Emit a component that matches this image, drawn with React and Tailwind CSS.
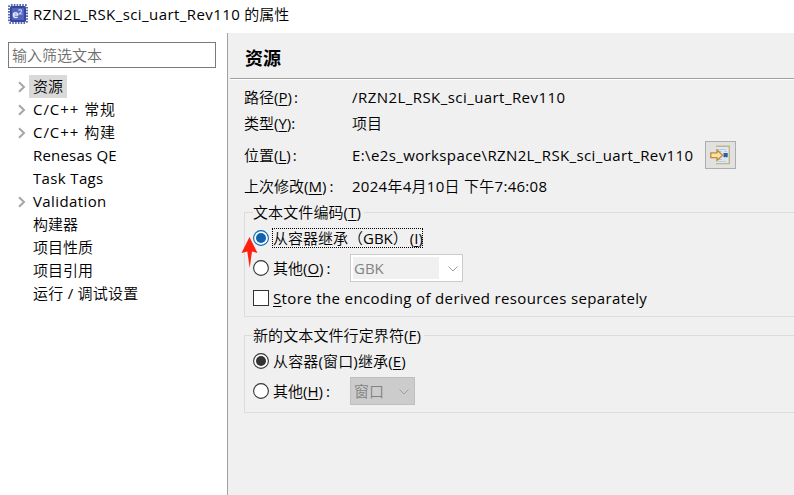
import React from "react";

const Key = ({ children }) => (
  <span className="underline decoration-1 underline-offset-2">{children}</span>
);

const Chevron = () => (
  <svg width="8" height="12" viewBox="0 0 8 12" className="mt-px ml-px shrink-0">
    <path d="M1 1.2 L6 6 L1 10.8" fill="none" stroke="#a6a6a6" strokeWidth="2" />
  </svg>
);

const ChipIcon = () => (
  <svg width="20" height="20" viewBox="0 0 20 20" className="shrink-0">
    <rect x="1" y="1" width="18" height="18" rx="2" fill="none" stroke="#5a68ae" strokeWidth="2" strokeDasharray="1.6 1.2" />
    <rect x="2" y="2" width="16" height="16" rx="1.5" fill="#34479f" />
    <rect x="4" y="4" width="12" height="12" fill="#5265b8" />
    <path d="M5.2 11 H9.6 C9.6 8.2 5.4 8 5.4 11.2 C5.4 13.8 8.4 14 9.6 13" fill="none" stroke="#dfe4fa" strokeWidth="1.5" />
    <path d="M10.6 6.6 C11.5 5 14.4 5.6 13.4 7.6 L11 10 H14.4" fill="none" stroke="#c3ccf2" strokeWidth="1.2" />
  </svg>
);

const OpenIcon = () => (
  <svg width="21" height="20" viewBox="0 0 21 20">
    <rect x="7" y="1" width="12.5" height="17.5" fill="#dce8f5" />
    <path d="M6 1.2 H19.3 V18.6 H6" fill="none" stroke="#c4b583" strokeWidth="1.4" />
    <path d="M7 4.5 H16 M7 6.5 H12 M14 6.5 H17 M7 14.5 H12 M8 16.5 H16" stroke="#b7c9e3" strokeWidth="1" />
    <rect x="13.5" y="8" width="4.2" height="4.2" fill="#305f9e" />
    <path d="M0.8 7.8 H7 V5 L12.6 10.2 L7 15.4 V12.6 H0.8 Z" fill="#fbe3a0" stroke="#c08a3a" strokeWidth="1.3" />
  </svg>
);

const Radio = ({ ring, dot }) => (
  <svg width="16" height="16" viewBox="0 0 16 16" className="shrink-0">
    <circle cx="8" cy="8" r="7.4" fill="#fff" stroke={ring} strokeWidth="1.1" />
    {dot && <circle cx="8" cy="8" r="5" fill={dot} />}
  </svg>
);

const Arrow = () => (
  <svg width="18" height="31" viewBox="0 0 18 31" className="absolute top-[237px] left-[241px]">
    <path d="M8.5 0 L16.5 16 L11 14.5 L8.7 31 L6.3 14.5 L0.5 16 Z" fill="#ff2010" />
  </svg>
);

const Down = ({ color }) => (
  <svg width="10" height="6" viewBox="0 0 10 6" className="mt-px shrink-0">
    <path d="M0.5 0.5 L5 5 L9.5 0.5" fill="none" stroke={color} strokeWidth="1" />
  </svg>
);

const items = [
  { label: "资源", open: true, selected: true },
  { label: "C/C++ 常规", open: true, track: "tracking-[0.95px]" },
  { label: "C/C++ 构建", open: true, track: "tracking-[0.95px]" },
  { label: "Renesas QE", track: "tracking-[0.2px]" },
  { label: "Task Tags", track: "tracking-[0.35px]" },
  { label: "Validation", open: true, track: "tracking-[0.4px]" },
  { label: "构建器" },
  { label: "项目性质" },
  { label: "项目引用" },
  { label: "运行 / 调试设置", track: "tracking-[0.25px]" },
];

const Row = ({ h, label, k, sep, children }) => (
  <div className={`flex items-center pb-[2px] ${h}`}>
    <div className="w-[108px] shrink-0">
      {label}(<Key>{k}</Key>)<span className={sep}>:</span>
    </div>
    {children}
  </div>
);

export default function App() {
  return (
    <div className="relative flex h-[495px] w-[794px] flex-col overflow-hidden bg-white font-['Open_Sans','Noto_Sans_CJK_SC_DemiLight','Noto_Sans_CJK_SC',sans-serif] text-[15px] leading-[20px] whitespace-nowrap text-black">
      <header className="flex h-[33px] shrink-0 items-start gap-[5px] pt-1 pl-2">
        <ChipIcon />
        <span>
          <span className="tracking-[0.43px]">RZN2L_RSK_sci_uart_Rev110</span> 的属性
        </span>
      </header>
      <div className="flex min-h-0 flex-1">
        <aside className="w-[228px] shrink-0 border-r border-[#a0a0a0] pt-[9px] pl-2">
          <div className="flex h-[26px] w-[208px] items-center border border-[#7a7a7a] pl-[3px] text-[#6d6d6d]">
            输入筛选文本
          </div>
          <ul className="mt-[7px]">
            {items.map((it) => (
              <li key={it.label} className="flex h-[23px] items-center pl-[9px]">
                <span className="flex w-3 shrink-0">{it.open && <Chevron />}</span>
                <span className={it.selected ? "flex h-[23px] items-center bg-[#d9d9d9] px-1 pb-[2px]" : `px-1 pb-[2px] ${it.track || ""}`}>
                  {it.label}
                </span>
              </li>
            ))}
          </ul>
        </aside>
        <main className="min-w-0 flex-1 bg-[#f0f0f0] pl-px">
          <h1 className="flex h-[45px] items-center pt-[2px] pl-4 font-['Noto_Sans_CJK_SC',sans-serif] text-[18px] font-bold">资源</h1>
          <div className="ml-px h-[2px] border-t border-[#a0a0a0] bg-white" />
          <div className="pt-[5px] pl-[15px]">
            <Row h="h-[26px]" label="路径" k="P" sep="ml-[2px]">
              <span className="tracking-[0.44px]">/RZN2L_RSK_sci_uart_Rev110</span>
            </Row>
            <Row h="h-[26px]" label="类型" k="Y" sep="">项目</Row>
            <Row h="h-[37px]" label="位置" k="L" sep="ml-[2px]">
              <span className="w-[353px] tracking-[0.38px]">E:\e2s_workspace\RZN2L_RSK_sci_uart_Rev110</span>
              <span className="flex h-[28px] w-[31px] items-center justify-center border border-[#adadad] bg-[#e1e1e1]">
                <OpenIcon />
              </span>
            </Row>
            <Row h="h-[26px]" label="上次修改" k="M" sep="ml-[3px]">
              <span className="tracking-[0.28px]">2024年4月10日 下午7:46:08</span>
            </Row>

            <fieldset className="mt-[2px] h-[115px] border border-r-0 border-[#dcdcdc] pl-2">
              <legend className="h-5 pr-[3px] tracking-[0.1px]">文本文件编码(<Key>T</Key>)</legend>
              <div className="mt-px flex h-[30px] items-center gap-[3px]">
                <Radio ring="#0067b0" dot="#0f62ab" />
                <span className="flex h-5 w-[151px] items-center border border-dotted border-black">
                  从容器继承（GBK）<span className="ml-[2px]">(<Key>I</Key>)</span>
                </span>
              </div>
              <div className="flex h-[30px] items-center gap-1">
                <Radio ring="#333" />
                <span className="w-[73px] shrink-0">其他(<Key>O</Key>)<span className="ml-[3px]">:</span></span>
                <span className="flex h-[28px] w-[113px] items-center border border-[#cccccc] bg-white pl-[2px]">
                  <span className="mr-[9px] h-[22px] w-[86px] bg-[#f0f0f0] pl-px leading-[22px] text-[#838383]">GBK</span>
                  <Down color="#a0a0a0" />
                </span>
              </div>
              <div className="flex h-[30px] items-center gap-1">
                <span className="h-4 w-4 border border-[#333] bg-white" />
                <span className="tracking-[0.37px]"><Key>S</Key>tore the encoding of derived resources separately</span>
              </div>
            </fieldset>

            <fieldset className="mt-2 h-[88px] border border-r-0 border-[#dcdcdc] pl-2">
              <legend className="h-5 pr-[3px] tracking-[0.1px]">新的文本文件行定界符(<Key>F</Key>)</legend>
              <div className="mt-px flex h-[30px] items-center gap-1">
                <Radio ring="#333" dot="#333" />
                <span className="tracking-[0.15px]">从容器(窗口)继承(<Key>E</Key>)</span>
              </div>
              <div className="flex h-[30px] items-center gap-1">
                <Radio ring="#333" />
                <span className="w-[73px] shrink-0">其他(<Key>H</Key>)<span className="ml-[3px]">:</span></span>
                <span className="flex h-[28px] w-[65px] items-center justify-between border border-[#bfbfbf] bg-[#cccccc] pr-[5px] pl-[3px] text-[#838383]">
                  窗口
                  <Down color="#a0a0a0" />
                </span>
              </div>
            </fieldset>
          </div>
        </main>
      </div>
      <Arrow />
    </div>
  );
}
